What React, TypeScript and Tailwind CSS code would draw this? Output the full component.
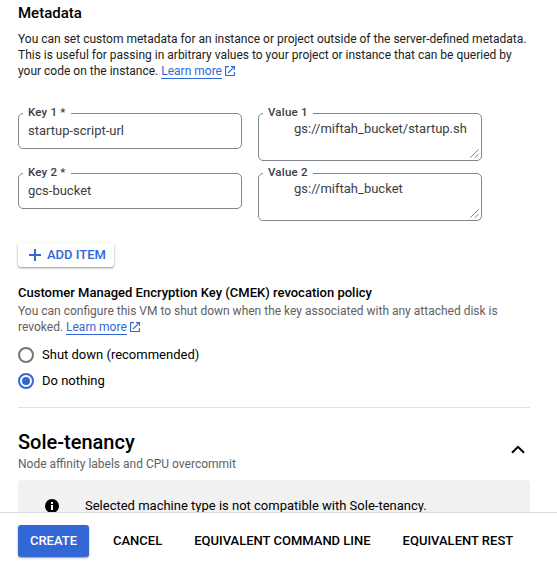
import type { ReactNode } from "react";

function ExternalIcon() {
  return (
    <svg className="ml-[3px] inline-block h-[10px] w-[10px] align-[-1px]" viewBox="0 0 10 10" fill="none" stroke="#3367d6" strokeWidth="1.15">
      <path d="M4 .55H.55v8.9h8.9V6M6 .55h3.45V4M9.4 .6 3 7" />
    </svg>
  );
}

function LearnMore() {
  return (
    <>
      <a href="#" className="inline-block h-4 border-b border-[#3367d6] leading-4 text-[#3367d6]">Learn more</a>
      <ExternalIcon />
    </>
  );
}

function Field({ label, wide, children }: { label: string; wide?: boolean; children: ReactNode }) {
  return (
    <fieldset
      className={
        "relative m-0 w-[224px] min-w-0 rounded-[5px] border border-[#80868b] pl-1 text-[#3c4043] " +
        (wide ? "h-[55px]" : "h-[43px]")
      }
    >
      <legend className="h-[14px] px-[5px] text-[11.5px] font-medium leading-[12px] tracking-[0.2px] whitespace-nowrap">{label}</legend>
      {children}
      {wide && (
        <svg className="absolute right-[2px] bottom-[2px] h-[9px] w-[9px]" viewBox="0 0 9 9" stroke="#5f6368" strokeWidth="0.8">
          <path d="M.5 8.5l8-8M5 8.5 8.5 5" />
        </svg>
      )}
    </fieldset>
  );
}

function Radio({ label, checked }: { label: string; checked?: boolean }) {
  return (
    <label className="flex h-[26px] items-center text-[13px]">
      <span className={"flex h-4 w-4 items-center justify-center rounded-full border-2 " + (checked ? "border-[#3367d6]" : "border-[#757575]")}>
        {checked && <span className="h-2 w-2 rounded-full bg-[#3367d6]" />}
      </span>
      <span className="ml-2">{label}</span>
    </label>
  );
}

export default function App() {
  return (
    <div className="flex h-[564px] w-[557px] flex-col overflow-hidden bg-white font-[Roboto,sans-serif] text-black">
      <main className="h-[512px] shrink-0 overflow-hidden pr-[27px] pl-[18px]">
        <h3 className="mt-[3px] text-[15px] font-medium leading-5">Metadata</h3>
        <p className="mt-2 h-12 text-xs leading-4 whitespace-nowrap text-[#212121]">
          You can set custom metadata for an instance or project outside of the server-defined metadata.
          <br />
          This is useful for passing in arbitrary values to your project or instance that can be queried by
          <br />
          your code on the instance. <LearnMore />
        </p>
        <div className="mt-[27px] grid grid-cols-[224px_224px] items-start gap-x-4 gap-y-[5px] text-[13px] leading-4">
          <Field label="Key 1 *"><div className="mt-[3px] pl-[5px]">startup-script-url</div></Field>
          <Field label="Value 1" wide><div className="mt-[1px] pl-[31px]">gs://miftah_bucket/startup.sh</div></Field>
          <Field label="Key 2 *"><div className="mt-[3px] pl-[5px]">gcs-bucket</div></Field>
          <Field label="Value 2" wide><div className="mt-[1px] pl-[31px]">gs://miftah_bucket</div></Field>
        </div>
        <button className="mt-[22px] flex h-6 w-24 items-center rounded-[3px] pl-[11px] text-[13px] font-medium text-[#3367d6] shadow-[0_1px_2px_rgba(0,0,0,0.36),0_1px_3px_rgba(0,0,0,0.1)]">
          <svg className="mr-[6px] h-3 w-3" viewBox="0 0 12 12" stroke="#3367d6" strokeWidth="2">
            <path d="M6 0v12M0 6h12" />
          </svg>
          ADD ITEM
        </button>
        <h4 className="mt-[18px] text-[13px] font-medium leading-4 whitespace-nowrap">Customer Managed Encryption Key (CMEK) revocation policy</h4>
        <p className="mt-[2px] h-8 text-xs leading-4 whitespace-nowrap text-[#616161]">
          You can configure this VM to shut down when the key associated with any attached disk is
          <br />
          revoked. <LearnMore />
        </p>
        <div className="mt-[7px]">
          <Radio label="Shut down (recommended)" />
          <Radio label="Do nothing" checked />
        </div>
        <hr className="mt-[13px] border-t border-[#e0e0e0]" />
        <div className="mt-[22px] flex items-start justify-between">
          <div>
            <h2 className="text-xl font-medium leading-6">Sole-tenancy</h2>
            <p className="mt-[2px] text-xs leading-4 text-[#616161]">Node affinity labels and CPU overcommit</p>
          </div>
          <svg className="mt-[15px] mr-[5px] h-[9px] w-[14px]" viewBox="0 0 14 9" fill="none" stroke="#000" strokeWidth="2">
            <path d="M1 7.8 7 1.8l6 6" />
          </svg>
        </div>
        <div className="mt-2 flex h-12 items-start rounded-t bg-[#f1f1f1] pt-[18px] pl-[27px] text-[13px] leading-4">
          <svg className="mt-[1px] mr-[26px] h-[14px] w-[14px]" viewBox="0 0 14 14">
            <circle cx="7" cy="7" r="7" />
            <path d="M6 3h2v2H6zM6 6h2v5H6z" fill="#fff" />
          </svg>
          Selected machine type is not compatible with Sole-tenancy.
        </div>
      </main>
      <footer className="flex h-[52px] shrink-0 items-start border-t border-[#dadce0] bg-white pt-3 pl-[18px] text-[13px] font-medium whitespace-nowrap">
        <button className="h-8 w-[71px] rounded-[3px] bg-[#3367d6] text-white shadow-[0_1px_2px_rgba(0,0,0,0.4)]">CREATE</button>
        <button className="ml-6 h-8">CANCEL</button>
        <button className="ml-8 h-8">EQUIVALENT COMMAND LINE</button>
        <button className="ml-8 h-8">EQUIVALENT REST</button>
      </footer>
    </div>
  );
}
